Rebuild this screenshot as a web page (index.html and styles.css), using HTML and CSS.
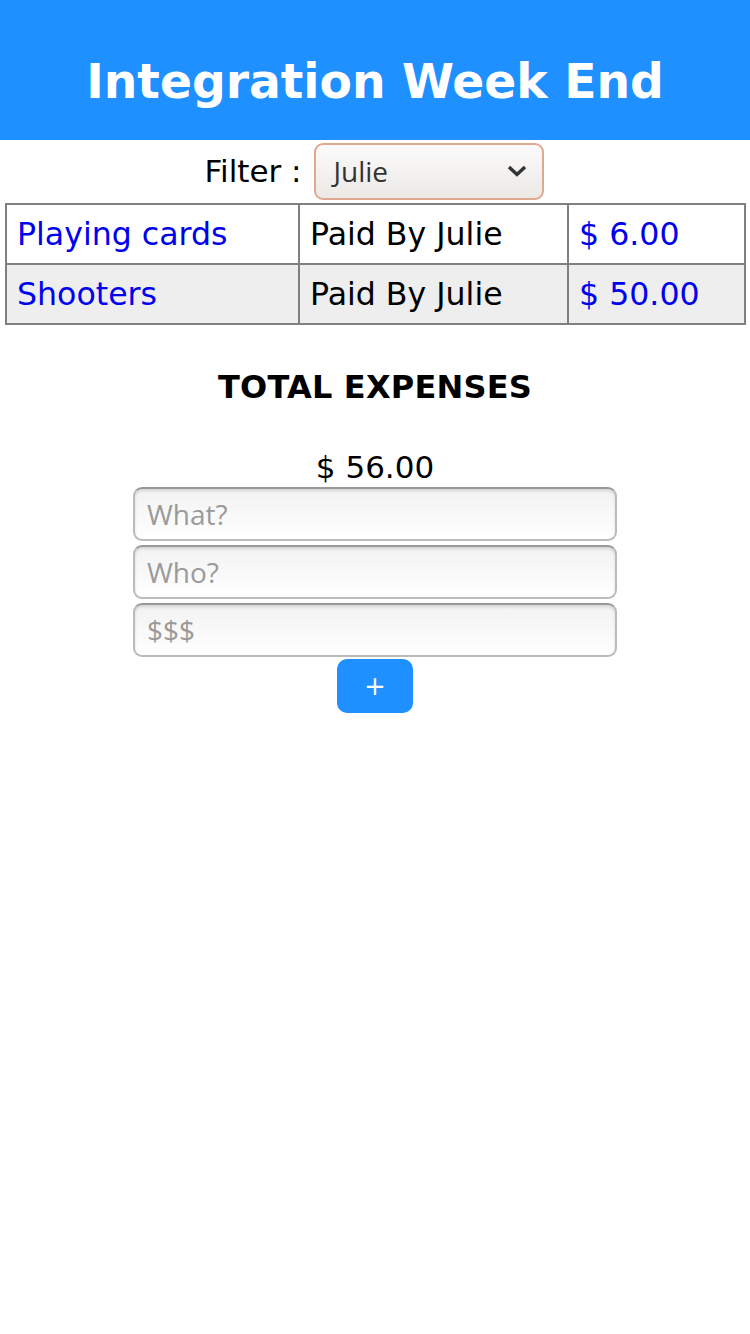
FILE: index.html
```html
<!DOCTYPE html>
<html>
<head>
<meta charset="utf-8">
<link rel="stylesheet" href="styles.css">
</head>
<body>
<header class="top">
  <h1 class="title">Integration Week End</h1>
</header>
<div class="filter">
  <label class="filter-label">Filter :</label>
  <div class="select">
    <span class="select-value">Julie</span>
    <svg class="chev" width="22" height="14" viewBox="0 0 22 14"><path d="M3 3 L11 10.5 L19 3" fill="none" stroke="#333" stroke-width="3.4"/></svg>
  </div>
</div>
<table class="expenses">
  <tr>
    <td class="c1 link">Playing cards</td>
    <td class="c2">Paid By Julie</td>
    <td class="c3 link">$ 6.00</td>
  </tr>
  <tr class="alt">
    <td class="c1 link">Shooters</td>
    <td class="c2">Paid By Julie</td>
    <td class="c3 link">$ 50.00</td>
  </tr>
</table>
<h3 class="total-title">TOTAL EXPENSES</h3>
<div class="total">$ 56.00</div>
<form class="add">
  <input class="field" placeholder="What?">
  <input class="field" placeholder="Who?">
  <input class="field" placeholder="$$$">
  <button type="button" class="plus">+</button>
</form>
</body>
</html>
```
FILE: styles.css
```css
html, body {
  margin: 0;
  padding: 0;
  background: #fff;
  font-family: "DejaVu Sans", sans-serif;
  color: #000;
}
.top {
  background: #1e90ff;
  height: 140px;
  display: flex;
  align-items: center;
  justify-content: center;
}
.title {
  margin: 0;
  color: #fff;
  font-size: 47.2px;
  font-weight: bold;
  padding-top: 22px;
}
.filter {
  display: flex;
  justify-content: center;
  align-items: center;
  gap: 12px;
  height: 62px;
  padding-right: 2px;
}
.filter-label {
  font-size: 31px;
}
.select {
  box-sizing: border-box;
  width: 230px;
  height: 57px;
  border: 2px solid #e0a890;
  border-radius: 9px;
  background: linear-gradient(#fbfbfb, #ece9e6);
  display: flex;
  align-items: center;
  justify-content: space-between;
  padding: 0 14px 0 18px;
}
.select-value {
  font-family: "Open Sans", sans-serif;
  font-size: 28px;
  color: #333;
}
.chev { display: block; }
.expenses {
  border-collapse: collapse;
  margin: 1px 5px 0 5px;
  width: 741px;
  font-size: 31.6px;
}
.expenses td {
  border: 2px solid #808080;
  height: 60px;
  padding: 0 10px;
  box-sizing: border-box;
}
.c1 { width: 293px; }
.c2 { width: 269px; }
.link { color: #0000ee; }
.alt td { background: #eeeeee; }
.total-title {
  margin: 44px 0 0 0;
  text-align: center;
  font-size: 32px;
  font-weight: bold;
  line-height: 36px;
  letter-spacing: 0.2px;
}
.total {
  margin-top: 43px;
  text-align: center;
  font-size: 31px;
  line-height: 38px;
}
.add {
  display: flex;
  flex-direction: column;
  align-items: center;
  gap: 4px;
  margin-top: 1px;
}
.field {
  box-sizing: border-box;
  width: 484px;
  height: 54px;
  border: 2px solid #bbb;
  border-top-color: #999;
  border-radius: 9px;
  background: linear-gradient(#f2f2f2, #ffffff);
  box-shadow: inset 0 2px 3px rgba(0,0,0,0.12);
  padding: 0 12px;
  font-family: "Open Sans", sans-serif;
  font-size: 28px;
  margin: 0;
}
.field::placeholder { color: #9a9a9a; }
.plus {
  margin-top: -2px;
  width: 76px;
  height: 54px;
  border: none;
  border-radius: 10px;
  background: #1e90ff;
  color: #fff;
  font-size: 26px;
  font-family: "DejaVu Sans", sans-serif;
}
```
